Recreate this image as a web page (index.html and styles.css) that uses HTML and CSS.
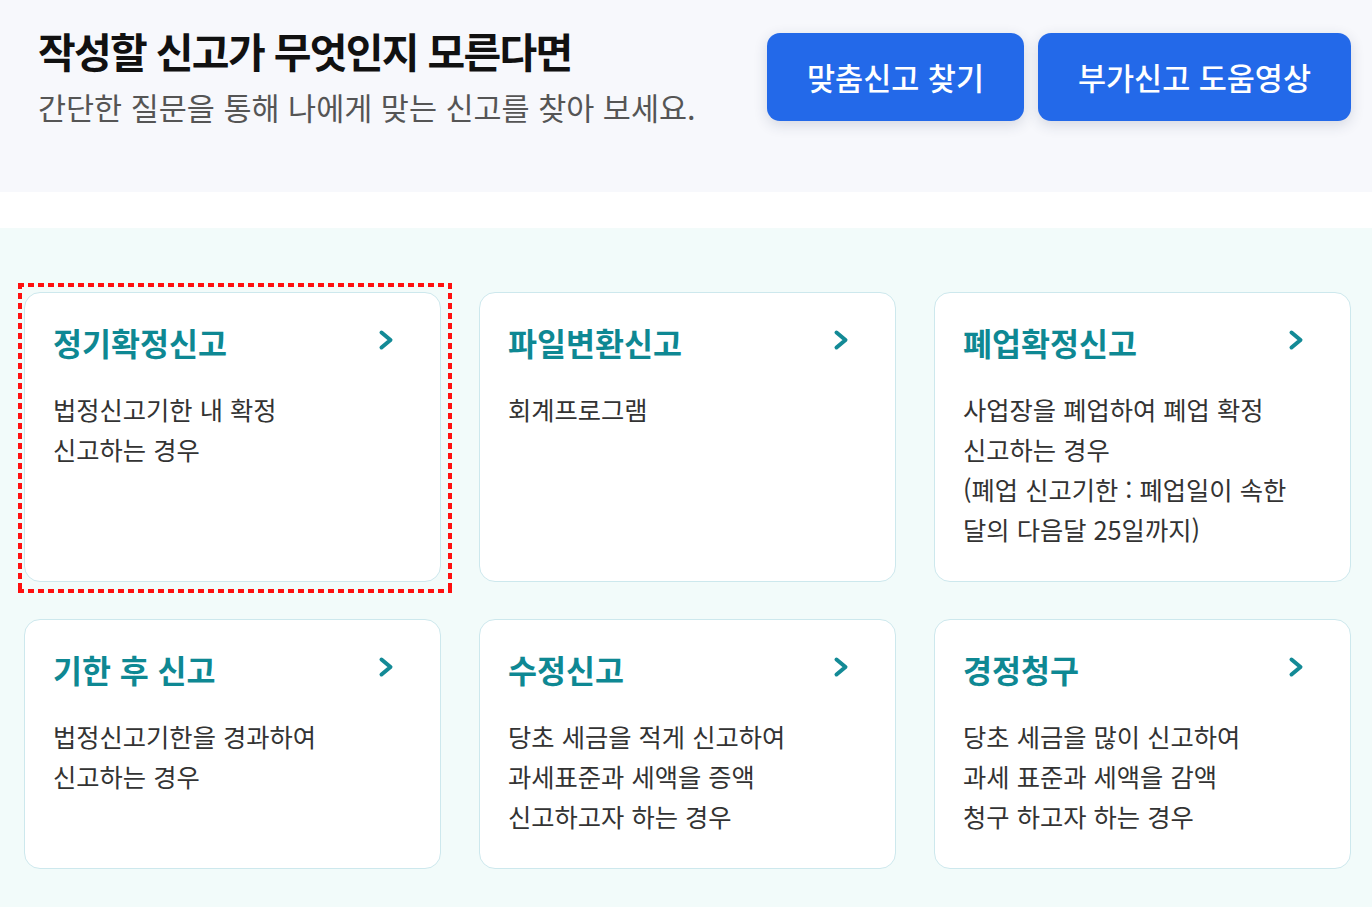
FILE: index.html
```html
<!DOCTYPE html>
<html lang="ko">
<head>
<meta charset="utf-8">
<title>신고 선택</title>
<link rel="stylesheet" href="styles.css">
</head>
<body>
<header class="top">
  <div class="intro">
    <h1 class="intro-title">작성할 신고가 무엇인지 모른다면</h1>
    <p class="intro-sub">간단한 질문을 통해 나에게 맞는 신고를 찾아 보세요.</p>
  </div>
  <div class="actions">
    <a class="btn" href="#">맞춤신고 찾기</a>
    <a class="btn" href="#">부가신고 도움영상</a>
  </div>
</header>
<main class="main">
  <div class="grid">
    <a class="card card-focus" href="#">
      <div class="card-head"><span class="card-title">정기확정신고</span><svg class="chev" viewBox="0 0 16 22"><polyline points="3.5,3.5 12.5,11 3.5,18.5"/></svg></div>
      <p class="card-desc">법정신고기한 내 확정<br>신고하는 경우</p>
    </a>
    <a class="card" href="#">
      <div class="card-head"><span class="card-title">파일변환신고</span><svg class="chev" viewBox="0 0 16 22"><polyline points="3.5,3.5 12.5,11 3.5,18.5"/></svg></div>
      <p class="card-desc">회계프로그램</p>
    </a>
    <a class="card" href="#">
      <div class="card-head"><span class="card-title">폐업확정신고</span><svg class="chev" viewBox="0 0 16 22"><polyline points="3.5,3.5 12.5,11 3.5,18.5"/></svg></div>
      <p class="card-desc">사업장을 폐업하여 폐업 확정<br>신고하는 경우<br>(폐업 신고기한 : 폐업일이 속한<br>달의 다음달 25일까지)</p>
    </a>
    <a class="card" href="#">
      <div class="card-head"><span class="card-title">기한 후 신고</span><svg class="chev" viewBox="0 0 16 22"><polyline points="3.5,3.5 12.5,11 3.5,18.5"/></svg></div>
      <p class="card-desc">법정신고기한을 경과하여<br>신고하는 경우</p>
    </a>
    <a class="card" href="#">
      <div class="card-head"><span class="card-title">수정신고</span><svg class="chev" viewBox="0 0 16 22"><polyline points="3.5,3.5 12.5,11 3.5,18.5"/></svg></div>
      <p class="card-desc">당초 세금을 적게 신고하여<br>과세표준과 세액을 증액<br>신고하고자 하는 경우</p>
    </a>
    <a class="card" href="#">
      <div class="card-head"><span class="card-title">경정청구</span><svg class="chev" viewBox="0 0 16 22"><polyline points="3.5,3.5 12.5,11 3.5,18.5"/></svg></div>
      <p class="card-desc">당초 세금을 많이 신고하여<br>과세 표준과 세액을 감액<br>청구 하고자 하는 경우</p>
    </a>
  </div>
</main>
</body>
</html>
```

FILE: styles.css
```css
* { box-sizing: border-box; }
html, body { margin: 0; padding: 0; }
body {
  background: #ffffff;
  font-family: "Noto Sans CJK KR", "Noto Sans", sans-serif;
  color: #333333;
  width: 1372px;
  height: 907px;
  overflow: hidden;
}
.top {
  height: 192px;
  background: #f7f8fc;
  display: flex;
  justify-content: space-between;
  align-items: flex-start;
  padding: 0 21px 0 38px;
}
.intro { padding-top: 22px; }
.intro-title {
  margin: 0;
  font-size: 41px;
  line-height: 56px;
  font-weight: 700;
  color: #111111;
  letter-spacing: -1.7px;
}
.intro-sub {
  margin: 9px 0 0;
  font-size: 30.5px;
  line-height: 40px;
  font-weight: 400;
  color: #555555;
}
.actions {
  margin-top: 33px;
  display: flex;
  gap: 14px;
}
.btn {
  display: flex;
  align-items: center;
  justify-content: center;
  height: 88px;
  padding: 0 40px;
  background: #2369e9;
  color: #ffffff;
  border-radius: 13px;
  font-size: 30.5px;
  font-weight: 500;
  text-decoration: none;
  box-shadow: 0 4px 14px rgba(40, 50, 90, 0.16);
}
.main {
  margin-top: 36px;
  background: #f2fbfa;
  height: 679px;
  padding: 64px 21px 0 24px;
}
.grid {
  display: grid;
  grid-template-columns: repeat(3, 1fr);
  column-gap: 38px;
  row-gap: 37px;
}
.card {
  position: relative;
  display: block;
  background: #ffffff;
  border: 1px solid #cde8ed;
  border-radius: 16px;
  padding: 29px 46px 32px 28px;
  text-decoration: none;
  color: #333333;
}
.card-focus::before {
  content: "";
  position: absolute;
  left: -7px;
  top: -10px;
  right: -12px;
  bottom: -12px;
  background:
    repeating-linear-gradient(90deg, #ff0f0f 0 6px, transparent 6px 10px) left top / 100% 4px no-repeat,
    repeating-linear-gradient(90deg, #ff0f0f 0 6px, transparent 6px 10px) left bottom / 100% 4px no-repeat,
    repeating-linear-gradient(180deg, #ff0f0f 0 6px, transparent 6px 10px) left top / 4px 100% no-repeat,
    repeating-linear-gradient(180deg, #ff0f0f 0 6px, transparent 6px 10px) right top / 4px 100% no-repeat;
  pointer-events: none;
}
.card-head {
  display: flex;
  align-items: center;
  justify-content: space-between;
  height: 40px;
}
.card-title {
  font-size: 31.5px;
  line-height: 40px;
  font-weight: 700;
  color: #0e8893;
}
.chev {
  width: 16px;
  height: 22px;
  margin-top: -4px;
  fill: none;
  stroke: #138a96;
  stroke-width: 4;
  stroke-linecap: round;
  stroke-linejoin: round;
}
.card-desc {
  margin: 27px 0 0;
  font-size: 25.3px;
  line-height: 40px;
  color: #333333;
}
```
